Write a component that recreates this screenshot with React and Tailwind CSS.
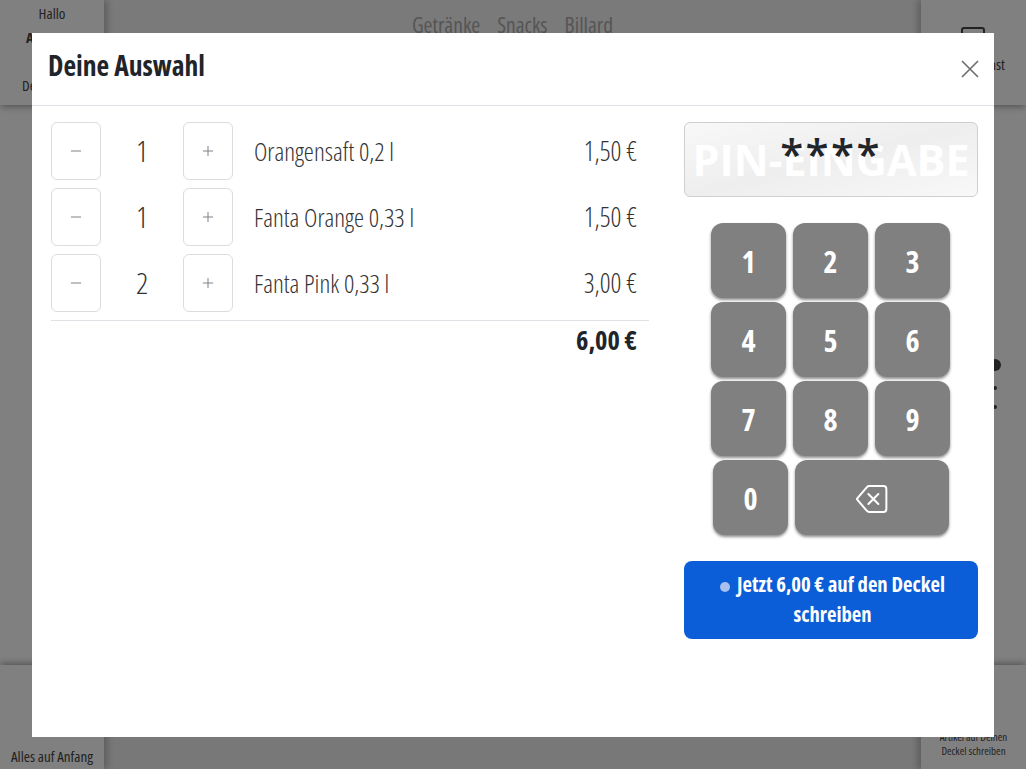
import React from 'react';
import { Minus, Plus } from 'lucide-react';
import { BsBackspace } from 'react-icons/bs';

const condensed = "font-['Open_Sans',sans-serif] [font-stretch:75%]";

const items = [
  { qty: 1, name: 'Orangensaft 0,2 l', price: '1,50 €' },
  { qty: 1, name: 'Fanta Orange 0,33 l', price: '1,50 €' },
  { qty: 2, name: 'Fanta Pink 0,33 l', price: '3,00 €' },
];

const Key = ({ children, className = 'w-[75px]' }) => (
  <button className={`${className} h-[75px] rounded-[12px] bg-[#808080] text-white text-[30px] leading-[38px] pt-[2px] pl-[1px] font-bold flex items-center justify-center shadow-[0_2px_3px_rgba(0,0,0,0.45)]`}>
    {children}
  </button>
);

const QtyButton = ({ children }) => (
  <button className="w-[50px] h-[58px] rounded-[6px] border border-[#dcdcdc] bg-white flex items-center justify-center text-[#7d8389]">
    {children}
  </button>
);

const Background = () => (
  <div className="h-[769px] w-full flex flex-col bg-[#808080] text-[#222] overflow-hidden">
    <div className="h-[105px] flex shrink-0 bg-[#7a7a7a] shadow-[0_3px_6px_rgba(0,0,0,0.2)]">
      <div className="w-[104px] flex flex-col items-center pt-[2px] text-[15px] bg-[#808080] shadow-[4px_0_6px_rgba(0,0,0,0.2)]">
        <span>Hallo</span>
        <span className="font-bold mt-[1px]">ARSENAL</span>
        <span className="mt-[26px] self-start pl-[22px]">Dein Deckel</span>
      </div>
      <div className="flex-1 flex justify-center gap-[17px] pt-[9px] text-[21.5px] text-[#555]">
        <span>Getränke</span>
        <span>Snacks</span>
        <span>Billard</span>
      </div>
      <div className="w-[105px] flex flex-col items-center pt-[27px] bg-[#808080] shadow-[-4px_0_6px_rgba(0,0,0,0.2)]">
        <div className="w-[24px] h-[20px] border-2 border-[#222] rounded-[3px] mr-[2px]" />
        <span className="text-[15px] mt-[6px] pl-[30px]">Dienst</span>
      </div>
    </div>
    <div className="flex-1 flex justify-end items-center pr-[25px] pb-[3px]">
      <div className="flex flex-col items-center gap-[15px]">
        <div className="w-[12px] h-[12px] rounded-full bg-[#222]" />
        <div className="w-[4px] h-[4px] rounded-full bg-[#222]" />
        <div className="w-[4px] h-[4px] rounded-full bg-[#222]" />
      </div>
    </div>
    <div className="h-[104px] flex shrink-0 bg-[#787878] shadow-[0_-3px_6px_rgba(0,0,0,0.2)]">
      <div className="w-[104px] flex items-end justify-center pb-[2px] text-[15px] bg-[#808080] shadow-[4px_0_6px_rgba(0,0,0,0.2)]">
        Alles auf Anfang
      </div>
      <div className="flex-1" />
      <div className="w-[105px] flex flex-col items-center justify-end pb-[11px] text-[11px] leading-[14px] bg-[#808080] shadow-[-4px_0_6px_rgba(0,0,0,0.2)]">
        <span>Artikel auf Deinen</span>
        <span>Deckel schreiben</span>
      </div>
    </div>
  </div>
);

export default function App() {
  return (
    <div className={`relative h-[769px] w-full overflow-hidden ${condensed}`}>
      <Background />
      {/* modal */}
      <div className="absolute left-[32px] top-[33px] w-[962px] h-[704px] bg-white flex flex-col">
        <div className="h-[73px] shrink-0 border-b border-[#dee2e6] flex items-start justify-between pl-[16px] pr-[15px]">
          <h2 className="text-[27.6px] font-bold text-[#212529] leading-[36px] mt-[14px]">Deine Auswahl</h2>
          <svg className="mt-[27px] text-[#6f6f6f]" width="18" height="18" viewBox="0 0 18 18" fill="none" stroke="currentColor" strokeWidth="1.7">
            <path d="M1 1l16 16M17 1L1 17" />
          </svg>
        </div>
        <div className="flex pt-[16px] pl-[19px] pr-[16px]">
          <div className="w-[598px]">
            <div className="flex flex-col gap-[8px] pb-[8px] border-b border-[#dee2e6]">
              {items.map((item) => (
                <div key={item.name} className="flex items-center h-[58px]">
                  <QtyButton><Minus className="w-[16px] h-[16px]" strokeWidth={1.5} /></QtyButton>
                  <span className="w-[82px] text-center text-[30px] font-light text-[#333] -mt-[2px]">{item.qty}</span>
                  <QtyButton><Plus className="w-[16px] h-[16px]" strokeWidth={1.5} /></QtyButton>
                  <span className="ml-[21px] text-[25.4px] font-light text-[#333]">{item.name}</span>
                  <span className="ml-auto mr-[12px] mt-[2px] text-[26.6px] font-light text-[#333]">{item.price}</span>
                </div>
              ))}
            </div>
            <div className="text-right pr-[12px] text-[26.4px] font-bold text-[#212529] leading-[38px]">6,00 €</div>
          </div>
          <div className="ml-[35px] w-[294px] flex flex-col items-center">
            <div className="relative w-full h-[75px] rounded-[6px] border border-[#cfcfcf] bg-linear-to-br from-[#f8f8f8] via-[#eeeeee] to-[#f8f8f8] flex items-center justify-center overflow-hidden">
              <span className="absolute inset-0 flex items-center justify-center whitespace-nowrap pt-[2px] text-[43px] font-bold text-white [font-stretch:100%]">PIN-EINGABE</span>
              <span className="relative text-[42px] leading-none tracking-[2.4px] font-semibold text-[#212529] -mt-[14px] [font-stretch:100%]">****</span>
            </div>
            <div className="mt-[26px] flex flex-col gap-[4px] -ml-[2px]">
              {[[1, 2, 3], [4, 5, 6], [7, 8, 9]].map((row) => (
                <div key={row[0]} className="flex gap-[7px]">
                  {row.map((n) => <Key key={n}>{n}</Key>)}
                </div>
              ))}
              <div className="flex gap-[7px] pl-[2px]">
                <Key>0</Key>
                <Key className="w-[154px]"><BsBackspace className="w-[32px] h-[32px]" /></Key>
              </div>
            </div>
            <button className="mt-[26px] w-full h-[78px] rounded-[8px] bg-[#0b5ed7] text-white text-[20.7px] font-bold leading-[30px] pb-[2px] pl-[3px]">
              <span className="inline-block w-[10px] h-[10px] rounded-full bg-[#a9bfee] mr-[7px]" />
              Jetzt 6,00 € auf den Deckel schreiben
            </button>
          </div>
        </div>
      </div>
    </div>
  );
}
